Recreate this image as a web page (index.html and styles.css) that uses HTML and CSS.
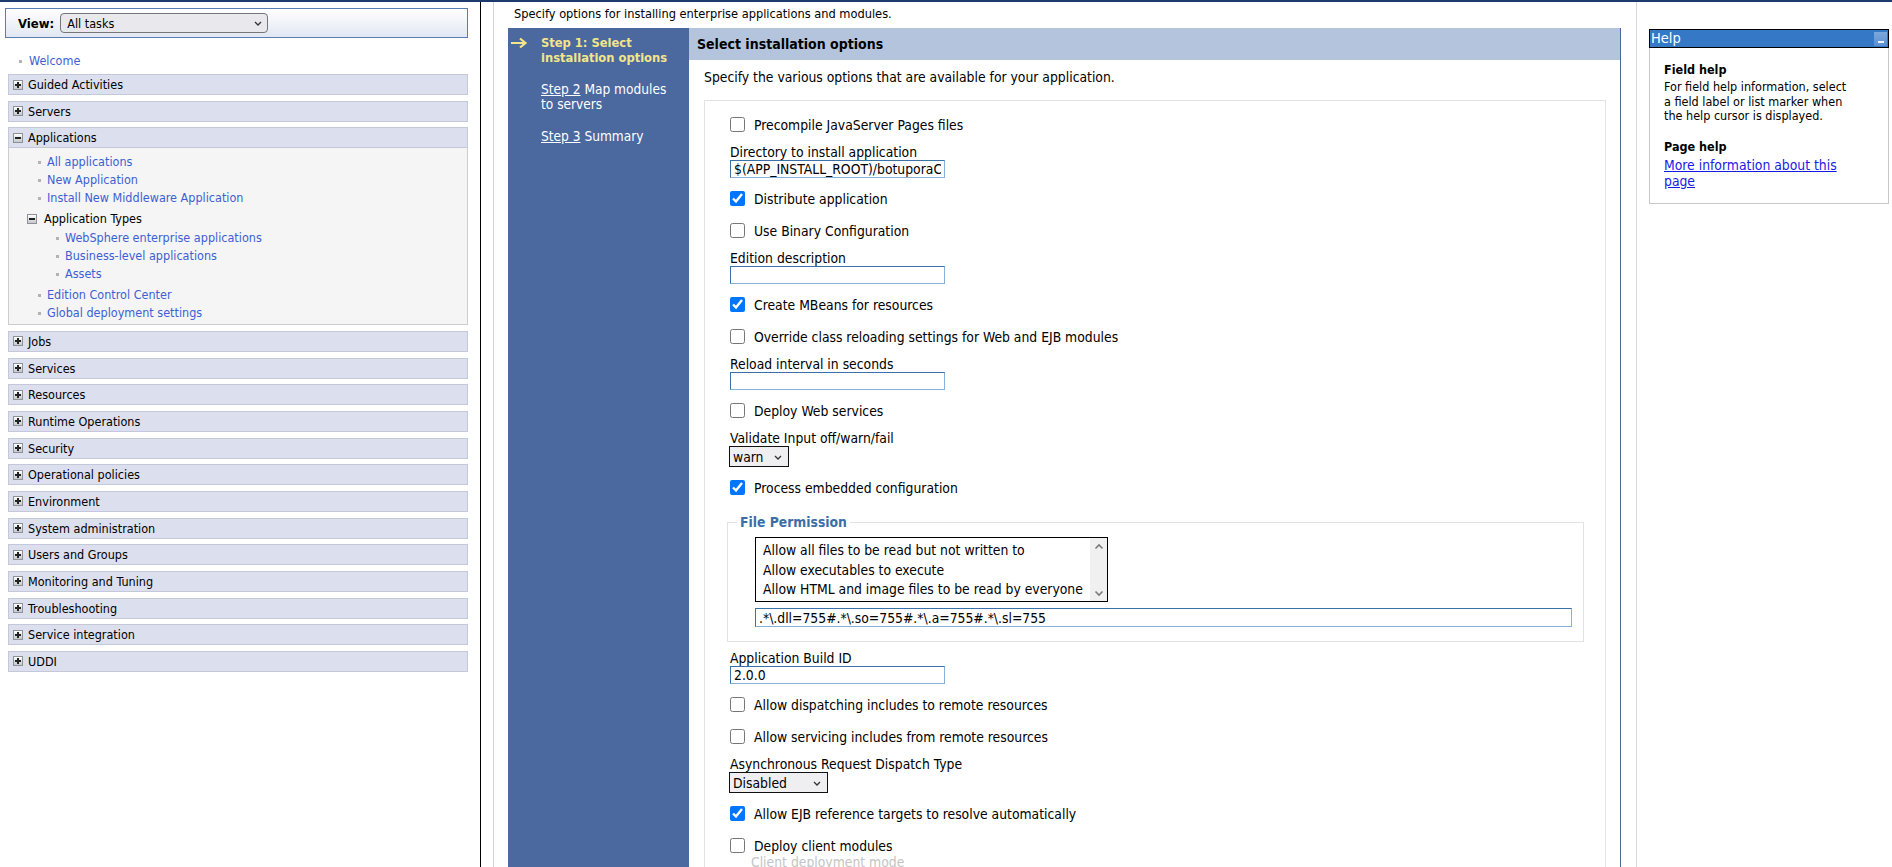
FILE: index.html
```html
<!DOCTYPE html>
<html lang="en">
<head>
<meta charset="utf-8">
<title>Install New Application</title>
<link rel="stylesheet" href="styles.css">
</head>
<body>
<div class="page">
  <nav class="navframe">
    <div class="viewbar">
      <b class="viewlbl">View:</b>
      <span class="selwrap">
        <select class="viewsel"><option>All tasks</option></select>
        <svg class="chev" width="8" height="5" viewBox="0 0 8 5"><path d="M1 1L4 4L7 1" fill="none" stroke="#333" stroke-width="1.3"/></svg>
      </span>
    </div>
    <div class="welcome"><span class="dot"></span><a class="nlink">Welcome</a></div>
    <ul class="tree">
      <li><div class="sechead"><span class="tog plus"></span>Guided Activities</div></li>
      <li><div class="sechead"><span class="tog plus"></span>Servers</div></li>
      <li>
        <div class="sechead"><span class="tog minus"></span>Applications</div>
        <ul class="sub">
          <li class="it"><span class="dot"></span><a class="nlink">All applications</a></li>
          <li class="it"><span class="dot"></span><a class="nlink">New Application</a></li>
          <li class="it"><span class="dot"></span><a class="nlink">Install New Middleware Application</a></li>
          <li class="grp"><span class="tog minus"></span>Application Types</li>
          <li class="it2"><span class="dot"></span><a class="nlink">WebSphere enterprise applications</a></li>
          <li class="it2"><span class="dot"></span><a class="nlink">Business-level applications</a></li>
          <li class="it2"><span class="dot"></span><a class="nlink">Assets</a></li>
          <li class="it after"><span class="dot"></span><a class="nlink">Edition Control Center</a></li>
          <li class="it"><span class="dot"></span><a class="nlink">Global deployment settings</a></li>
        </ul>
      </li>
      <li><div class="sechead"><span class="tog plus"></span>Jobs</div></li>
      <li><div class="sechead"><span class="tog plus"></span>Services</div></li>
      <li><div class="sechead"><span class="tog plus"></span>Resources</div></li>
      <li><div class="sechead"><span class="tog plus"></span>Runtime Operations</div></li>
      <li><div class="sechead"><span class="tog plus"></span>Security</div></li>
      <li><div class="sechead"><span class="tog plus"></span>Operational policies</div></li>
      <li><div class="sechead"><span class="tog plus"></span>Environment</div></li>
      <li><div class="sechead"><span class="tog plus"></span>System administration</div></li>
      <li><div class="sechead"><span class="tog plus"></span>Users and Groups</div></li>
      <li><div class="sechead"><span class="tog plus"></span>Monitoring and Tuning</div></li>
      <li><div class="sechead"><span class="tog plus"></span>Troubleshooting</div></li>
      <li><div class="sechead"><span class="tog plus"></span>Service integration</div></li>
      <li><div class="sechead"><span class="tog plus"></span>UDDI</div></li>
    </ul>
  </nav>

  <div class="content">
    <main class="main">
      <div class="main-inner">
        <p class="intro">Specify options for installing enterprise applications and modules.</p>
        <div class="wizard">
          <div class="steps">
            <div class="step current">
              <svg class="arrow" width="18" height="12" viewBox="0 0 18 12"><path d="M1 6H15M10 1.5L15.5 6L10 10.5" fill="none" stroke="#f3e58a" stroke-width="2.2"/></svg>
              <span>Step 1: Select<br>installation options</span>
            </div>
            <div class="step"><span><a class="slink">Step 2</a> Map modules<br>to servers</span></div>
            <div class="step"><span><a class="slink">Step 3</a> Summary</span></div>
          </div>
          <div class="pane">
            <div class="panehead">Select installation options</div>
            <p class="panedesc">Specify the various options that are available for your application.</p>
            <div class="formbox">
              <div class="row"><input type="checkbox" class="cb"><span>Precompile JavaServer Pages files</span></div>
              <div class="field"><label class="flabel">Directory to install application</label><input class="txt" type="text" value="$(APP_INSTALL_ROOT)/botuporaCell01"></div>
              <div class="row"><input type="checkbox" class="cb" checked><span>Distribute application</span></div>
              <div class="row"><input type="checkbox" class="cb"><span>Use Binary Configuration</span></div>
              <div class="field"><label class="flabel">Edition description</label><input class="txt" type="text" value=""></div>
              <div class="row"><input type="checkbox" class="cb" checked><span>Create MBeans for resources</span></div>
              <div class="row"><input type="checkbox" class="cb"><span>Override class reloading settings for Web and EJB modules</span></div>
              <div class="field"><label class="flabel">Reload interval in seconds</label><input class="txt" type="text" value=""></div>
              <div class="row"><input type="checkbox" class="cb"><span>Deploy Web services</span></div>
              <div class="field"><label class="flabel">Validate Input off/warn/fail</label>
                <span class="selwrap">
                  <select class="sel sel-warn"><option>warn</option></select>
                  <svg class="chev chev-f" width="8" height="5" viewBox="0 0 8 5"><path d="M1 1L4 4L7 1" fill="none" stroke="#333" stroke-width="1.3"/></svg>
                </span>
              </div>
              <div class="row"><input type="checkbox" class="cb" checked><span>Process embedded configuration</span></div>
              <fieldset class="perm">
                <legend class="permlegend">File Permission</legend>
                <div class="listbox">
                  <div class="opts">
                    <div class="opt">Allow all files to be read but not written to</div>
                    <div class="opt">Allow executables to execute</div>
                    <div class="opt">Allow HTML and image files to be read by everyone</div>
                  </div>
                  <div class="sb">
                    <svg width="10" height="7" viewBox="0 0 10 7"><path d="M1.5 5.5L5 2L8.5 5.5" fill="none" stroke="#7a7a7a" stroke-width="1.6"/></svg>
                    <svg width="10" height="7" viewBox="0 0 10 7"><path d="M1.5 1.5L5 5L8.5 1.5" fill="none" stroke="#7a7a7a" stroke-width="1.6"/></svg>
                  </div>
                </div>
                <input class="txt wide" type="text" value=".*\.dll=755#.*\.so=755#.*\.a=755#.*\.sl=755">
              </fieldset>
              <div class="field"><label class="flabel">Application Build ID</label><input class="txt" type="text" value="2.0.0"></div>
              <div class="row"><input type="checkbox" class="cb"><span>Allow dispatching includes to remote resources</span></div>
              <div class="row"><input type="checkbox" class="cb"><span>Allow servicing includes from remote resources</span></div>
              <div class="field"><label class="flabel">Asynchronous Request Dispatch Type</label>
                <span class="selwrap">
                  <select class="sel sel-dis"><option>Disabled</option></select>
                  <svg class="chev chev-f" width="8" height="5" viewBox="0 0 8 5"><path d="M1 1L4 4L7 1" fill="none" stroke="#333" stroke-width="1.3"/></svg>
                </span>
              </div>
              <div class="row"><input type="checkbox" class="cb" checked><span>Allow EJB reference targets to resolve automatically</span></div>
              <div class="row"><input type="checkbox" class="cb"><span>Deploy client modules</span></div>
              <div class="subopt">Client deployment mode</div>
            </div>
          </div>
        </div>
      </div>
    </main>

    <aside class="helpframe">
      <div class="helpbox">
        <div class="helptitle"><span>Help</span><span class="minbtn"></span></div>
        <div class="helpbody">
          <h4 class="hh">Field help</h4>
          <p class="hp">For field help information, select<br>a field label or list marker when<br>the help cursor is displayed.</p>
          <h4 class="hh hh2">Page help</h4>
          <p class="hp hp-link"><a class="hlink">More information about this<br>page</a></p>
        </div>
      </div>
    </aside>
  </div>
</div>
</body>
</html>
```

FILE: styles.css
```css
html, body {
  margin: 0;
  padding: 0;
  height: 867px;
  overflow: hidden;
  background: #fff;
}
body {
  font-family: "DejaVu Sans Condensed", "DejaVu Sans", sans-serif;
  font-size: 12.5px;
  color: #000;
}
.page {
  display: flex;
  height: 867px;
  border-top: 2px solid #1d3a6d;
  box-sizing: border-box;
}

/* ---------- left navigation ---------- */
.navframe {
  width: 480px;
  flex: none;
  border-right: 1px solid #000;
  box-sizing: content-box;
}
.viewbar {
  margin: 6px 12px 0 5px;
  height: 30px;
  box-sizing: border-box;
  border: 1px solid #5a7db3;
  background: linear-gradient(#ffffff, #e1e7f2);
  display: flex;
  align-items: center;
  padding-left: 12px;
  gap: 6px;
}
.viewlbl {
  font-size: 13px;
  font-weight: bold;
}
.selwrap {
  position: relative;
  display: inline-flex;
}
.chev {
  position: absolute;
  right: 6px;
  top: 8px;
  pointer-events: none;
}
.viewsel {
  appearance: none;
  -webkit-appearance: none;
  width: 208px;
  height: 20px;
  font-family: inherit;
  font-size: 12.5px;
  border: 1px solid #767676;
  border-radius: 4px;
  background-color: #e9e9ed;
  color: #000;
  padding: 0 4px 0 6px;
  margin: 0;
}
.welcome {
  margin: 14px 0 0 19px;
  line-height: 18px;
  display: flex;
  align-items: center;
}
.dot {
  display: inline-block;
  width: 3px;
  height: 3px;
  background: #b3b3b3;
  margin-right: 7px;
  flex: none;
}
.nlink {
  color: #3d5fd3;
  text-decoration: none;
}
.tree {
  list-style: none;
  margin: 4px 12px 0 8px;
  padding: 0;
  display: flex;
  flex-direction: column;
  gap: 5.67px;
}
.sechead {
  height: 21px;
  box-sizing: border-box;
  border: 1px solid #c5c8d8;
  background: #dcdfee;
  display: flex;
  align-items: center;
  padding-left: 4px;
  gap: 5px;
}
.tog {
  position: relative;
  width: 10px;
  height: 10px;
  box-sizing: border-box;
  border: 1px solid #8e9296;
  background: linear-gradient(#ffffff, #c4c7cc);
  flex: none;
}
.tog::before {
  content: "";
  position: absolute;
  left: 1px;
  top: 3px;
  width: 6px;
  height: 2px;
  background: #222;
}
.tog.plus::after {
  content: "";
  position: absolute;
  left: 3px;
  top: 1px;
  width: 2px;
  height: 6px;
  background: #222;
}
.sub {
  list-style: none;
  margin: 0;
  padding: 5px 0 2px;
  border: 1px solid #cdcdcd;
  border-top: none;
  background: #f5f5f5;
}
.sub li {
  line-height: 18px;
  display: flex;
  align-items: center;
}
.sub .it { padding-left: 29px; }
.sub .it .dot { margin-right: 6px; }
.sub .grp {
  padding-left: 18px;
  margin-top: 2px;
  gap: 7px;
  line-height: 20px;
}
.sub .it2 { padding-left: 47px; }
.sub .it2 .dot { margin-right: 6px; }
.sub .after { margin-top: 3px; }

/* ---------- content ---------- */
.content {
  flex: 1;
  display: flex;
  min-width: 0;
}
.main {
  flex: 1;
  padding-left: 12px;
  min-width: 0;
}
.main-inner {
  border-left: 1px solid #d6d6d6;
  padding-left: 14px;
  margin-right: 15px;
  height: 100%;
  box-sizing: border-box;
}
.intro {
  margin: 0;
  padding: 4px 0 0 6px;
  line-height: 16px;
  height: 26px;
  box-sizing: border-box;
  font-size: 12.7px;
}
.wizard {
  display: flex;
  height: 900px;
}
.steps {
  width: 181px;
  flex: none;
  background: #4b689f;
  color: #fff;
  padding-top: 7px;
  box-sizing: border-box;
  font-size: 13.6px;
}
.step {
  position: relative;
  padding-left: 33px;
  line-height: 15px;
  margin-bottom: 17px;
}
.step.current {
  color: #f3e58a;
  font-weight: bold;
  font-size: 12.8px;
}
.arrow {
  position: absolute;
  left: 2px;
  top: 2px;
}
.slink {
  color: #fff;
  text-decoration: underline;
}
.pane {
  flex: 1;
  border-right: 1px solid #4b689f;
  padding: 0 14px 0 0;
  min-width: 0;
  font-size: 13.8px;
}
.panehead {
  height: 32px;
  background: #b5c4dd;
  font-weight: bold;
  line-height: 32px;
  padding-left: 8px;
  margin-right: -14px;
  font-size: 14px;
}
.panedesc {
  margin: 9px 0 0 15px;
  line-height: 16px;
}
.formbox {
  margin: 15px 0 0 15px;
  border: 1px solid #e3e3e3;
  padding: 14px 0 0 25px;
  display: flex;
  flex-direction: column;
  gap: 13px;
  height: 900px;
  box-sizing: border-box;
}
.row {
  display: flex;
  align-items: center;
  height: 19px;
}
.cb {
  width: 15px;
  height: 15px;
  margin: 2px 9px 2px 0;
  flex: none;
}
.field {
  margin: -2px 0;
  display: flex;
  flex-direction: column;
  align-items: flex-start;
}
.flabel {
  line-height: 15px;
}
.txt {
  width: 215px;
  height: 18px;
  box-sizing: border-box;
  border: 1px solid;
  border-color: #3a71a8 #86b1dc #86b1dc #3a71a8;
  font-family: inherit;
  font-size: 13.8px;
  padding: 0 3px;
  margin: 0;
  background: #fff;
  color: #000;
  outline: none;
}
.sel {
  appearance: none;
  -webkit-appearance: none;
  height: 21px;
  box-sizing: border-box;
  border: 1px solid #111;
  border-radius: 0;
  background-color: #efeff1;
  font-family: inherit;
  font-size: 13.8px;
  color: #000;
  padding: 0 2px 0 3px;
  margin: 0 0 0 -1px;
}
.chev-f {
  right: 7px;
  top: 9px;
}
.sel-warn { width: 60px; }
.sel-dis { width: 99px; }
.perm {
  margin: 5px 21px -2px -3px;
  border: 1px solid #e2e2e2;
  padding: 7px 11px 14px 27px;
  min-width: 0;
}
.permlegend {
  color: #3b6ea5;
  font-weight: bold;
  padding: 0 3px;
  margin-left: -18px;
  line-height: 15px;
}
.listbox {
  width: 353px;
  height: 65px;
  box-sizing: border-box;
  border: 1px solid #000;
  display: flex;
  background: #fff;
}
.opts {
  flex: 1;
  padding: 3px 0 0 7px;
  overflow: hidden;
}
.opt {
  line-height: 19.5px;
  white-space: nowrap;
}
.sb {
  width: 17px;
  flex: none;
  background: #f0f0f0;
  display: flex;
  flex-direction: column;
  justify-content: space-between;
  align-items: center;
  padding: 5px 0 4px;
  box-sizing: border-box;
}
.txt.wide {
  display: block;
  width: 100%;
  height: 19px;
  margin-top: 6px;
}
.subopt {
  margin: -13px 0 0 21px;
  color: #c4c4c4;
  line-height: 15px;
}

/* ---------- help frame ---------- */
.helpframe {
  width: 256px;
  flex: none;
  border-left: 1px solid #d6d6d6;
  padding: 27px 0 0 12px;
  box-sizing: border-box;
}
.helpbox {
  width: 240px;
  height: 175px;
  box-sizing: border-box;
  border: 1px solid #c8c8c8;
  border-top: none;
}
.helptitle {
  margin: 0 -1px;
  height: 19px;
  box-sizing: border-box;
  border: 1px solid #000;
  background: #3478c6;
  color: #fff;
  display: flex;
  align-items: center;
  justify-content: space-between;
  padding-left: 1px;
  line-height: 17px;
  font-size: 14.5px;
}
.minbtn {
  position: relative;
  width: 13px;
  height: 14px;
  background: linear-gradient(#7ea8dc, #5a8fd0);
  margin-right: 1px;
}
.minbtn::after {
  content: "";
  position: absolute;
  left: 4px;
  bottom: 3px;
  width: 6px;
  height: 2px;
  background: #eef4ff;
}
.helpbody {
  padding: 14px 10px 0 14px;
}
.hh {
  margin: 0 0 3px;
  font-size: 12.5px;
  line-height: 15px;
  font-weight: bold;
}
.hh2 { margin-top: 15px; }
.hp {
  margin: 0;
  line-height: 14.7px;
}
.hp-link {
  font-size: 13.8px;
  line-height: 16px;
}
.hlink {
  color: #1a1ae6;
  text-decoration: underline;
}
```
